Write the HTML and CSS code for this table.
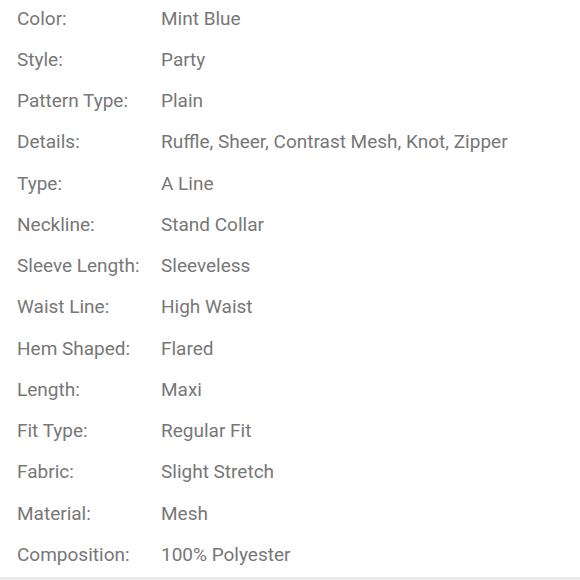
FILE: index.html
```html
<!DOCTYPE html>
<html>
<head>
<meta charset="utf-8">
<link rel="stylesheet" href="styles.css">
</head>
<body>
<div class="page">
  <dl class="specs">
    <div class="row"><dt>Color:</dt><dd>Mint Blue</dd></div>
    <div class="row"><dt>Style:</dt><dd>Party</dd></div>
    <div class="row"><dt>Pattern Type:</dt><dd>Plain</dd></div>
    <div class="row"><dt>Details:</dt><dd>Ruffle, Sheer, Contrast Mesh, Knot, Zipper</dd></div>
    <div class="row"><dt>Type:</dt><dd>A Line</dd></div>
    <div class="row"><dt>Neckline:</dt><dd>Stand Collar</dd></div>
    <div class="row"><dt>Sleeve Length:</dt><dd>Sleeveless</dd></div>
    <div class="row"><dt>Waist Line:</dt><dd>High Waist</dd></div>
    <div class="row"><dt>Hem Shaped:</dt><dd>Flared</dd></div>
    <div class="row"><dt>Length:</dt><dd>Maxi</dd></div>
    <div class="row"><dt>Fit Type:</dt><dd>Regular Fit</dd></div>
    <div class="row"><dt>Fabric:</dt><dd>Slight Stretch</dd></div>
    <div class="row"><dt>Material:</dt><dd>Mesh</dd></div>
    <div class="row"><dt>Composition:</dt><dd>100% Polyester</dd></div>
  </dl>
  <div class="bottom-bar"></div>
</div>
</body>
</html>
```
FILE: styles.css
```css
html, body {
  margin: 0;
  padding: 0;
  background: #ffffff;
}
.page {
  width: 580px;
  height: 580px;
  display: flex;
  flex-direction: column;
  overflow: hidden;
}
.specs {
  margin: 0;
  padding: 7.5px 0 0 17px;
  display: flex;
  flex-direction: column;
  gap: 20.27px;
  font-family: Roboto, "Noto Sans", sans-serif;
  font-size: 19px;
  line-height: 21px;
  color: #777777;
  flex: 1;
}
.row {
  display: grid;
  grid-template-columns: 144px auto;
}
dt, dd {
  margin: 0;
  white-space: nowrap;
}
.bottom-bar {
  height: 3px;
  background: #e9e9e9;
}
```
